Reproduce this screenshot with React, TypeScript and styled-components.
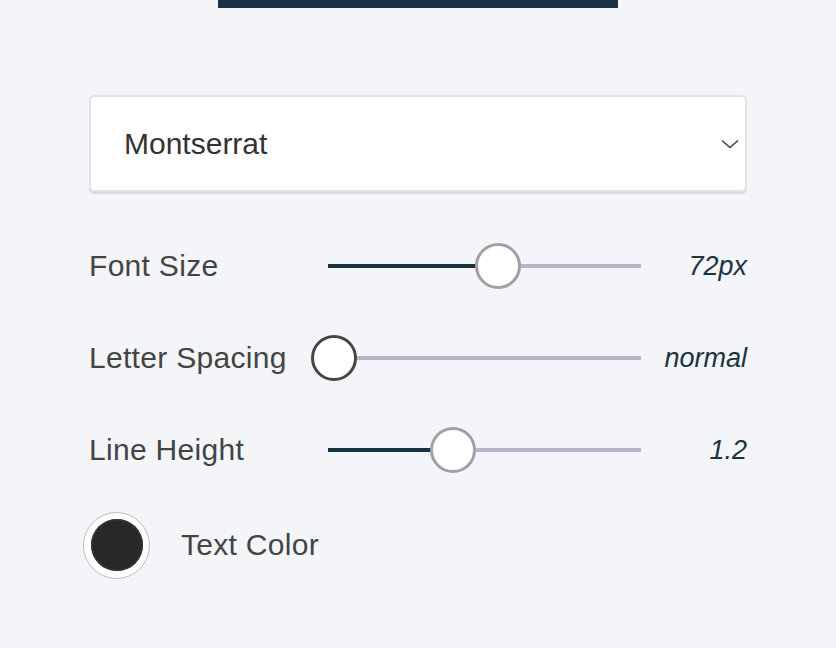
import { FC } from 'react';
import styled, { createGlobalStyle } from 'styled-components';

const GlobalStyle = createGlobalStyle`
  html, body {
    margin: 0;
    padding: 0;
    background: #f4f5f9;
    font-family: "Liberation Sans", Arial, sans-serif;
  }
`;

const Page = styled.div`
  width: 836px;
  height: 648px;
  background: #f4f5f9;
  overflow: hidden;
`;

const TopBar = styled.div`
  width: 400px;
  height: 8px;
  margin: 0 auto;
  background: #1b3441;
`;

const Panel = styled.div`
  width: 658px;
  margin: 87px 0 0 89px;
  display: flex;
  flex-direction: column;
`;

const Select = styled.div`
  box-sizing: border-box;
  height: 97px;
  display: flex;
  align-items: center;
  justify-content: space-between;
  padding: 0 6px 0 33px;
  background: #ffffff;
  border: 2px solid #e2e2e6;
  border-radius: 5px;
  box-shadow: 0 2px 0 #dcdce0;
  font-size: 30px;
  color: #333333;
`;

const Chevron = styled.svg`
  width: 18px;
  height: 10px;
`;

const Rows = styled.div`
  margin-top: 28px;
  display: flex;
  flex-direction: column;
`;

const Row = styled.div`
  height: 92px;
  display: grid;
  grid-template-columns: 239px 313px 1fr;
  align-items: center;
`;

const Label = styled.div`
  font-size: 30px;
  letter-spacing: 0.3px;
  color: #434444;
  white-space: nowrap;
`;

const Track = styled.div`
  position: relative;
  height: 4px;
  background: #b6b6c8;
`;

const Fill = styled.div`
  position: absolute;
  left: 0;
  top: 0;
  bottom: 0;
  background: #1b3441;
`;

const Thumb = styled.div<{ $dark?: boolean }>`
  position: absolute;
  top: 50%;
  width: 46px;
  height: 46px;
  box-sizing: border-box;
  border-radius: 50%;
  background: #ffffff;
  border: 3px solid ${(p) => (p.$dark ? '#464646' : '#a0a0a6')};
  transform: translate(-50%, -50%);
`;

const Value = styled.div`
  text-align: right;
  font-size: 27px;
  font-style: italic;
  color: #1b3441;
`;

const ColorRow = styled.div`
  height: 98px;
  display: flex;
  align-items: center;
  gap: 31px;
  margin-left: -6px;
`;

const Swatch = styled.div`
  box-sizing: border-box;
  width: 67px;
  height: 67px;
  border-radius: 50%;
  background: #ffffff;
  border: 1.5px solid #bdbdbd;
  display: flex;
  align-items: center;
  justify-content: center;
`;

const SwatchInner = styled.div`
  width: 52px;
  height: 52px;
  border-radius: 50%;
  background: #2a2826;
  box-shadow: inset 0 0 0 1.5px #3a3836;
`;

interface ISlider {
  label: string;
  value: string;
  pct: number;
  dark?: boolean;
}

const sliders: ISlider[] = [
  { label: 'Font Size', value: '72px', pct: 0.545 },
  { label: 'Letter Spacing', value: 'normal', pct: 0, dark: true },
  { label: 'Line Height', value: '1.2', pct: 0.395 },
];

const SliderRow: FC<ISlider> = ({ label, value, pct, dark }) => {
  const pos = 6 + pct * 301;
  return (
    <Row>
      <Label>{label}</Label>
      <Track>
        <Fill style={{ width: pos }} />
        <Thumb $dark={dark} style={{ left: pos }} />
      </Track>
      <Value>{value}</Value>
    </Row>
  );
};

export default function App() {
  return (
    <Page>
      <GlobalStyle />
      <TopBar />
      <Panel>
        <Select>
          Montserrat
          <Chevron viewBox="0 0 18 10" fill="none">
            <path d="M1 1.5 L9 8.5 L17 1.5" stroke="#444" strokeWidth="1.6" />
          </Chevron>
        </Select>
        <Rows>
          {sliders.map((s) => (
            <SliderRow key={s.label} {...s} />
          ))}
          <ColorRow>
            <Swatch>
              <SwatchInner />
            </Swatch>
            <Label>Text Color</Label>
          </ColorRow>
        </Rows>
      </Panel>
    </Page>
  );
}
